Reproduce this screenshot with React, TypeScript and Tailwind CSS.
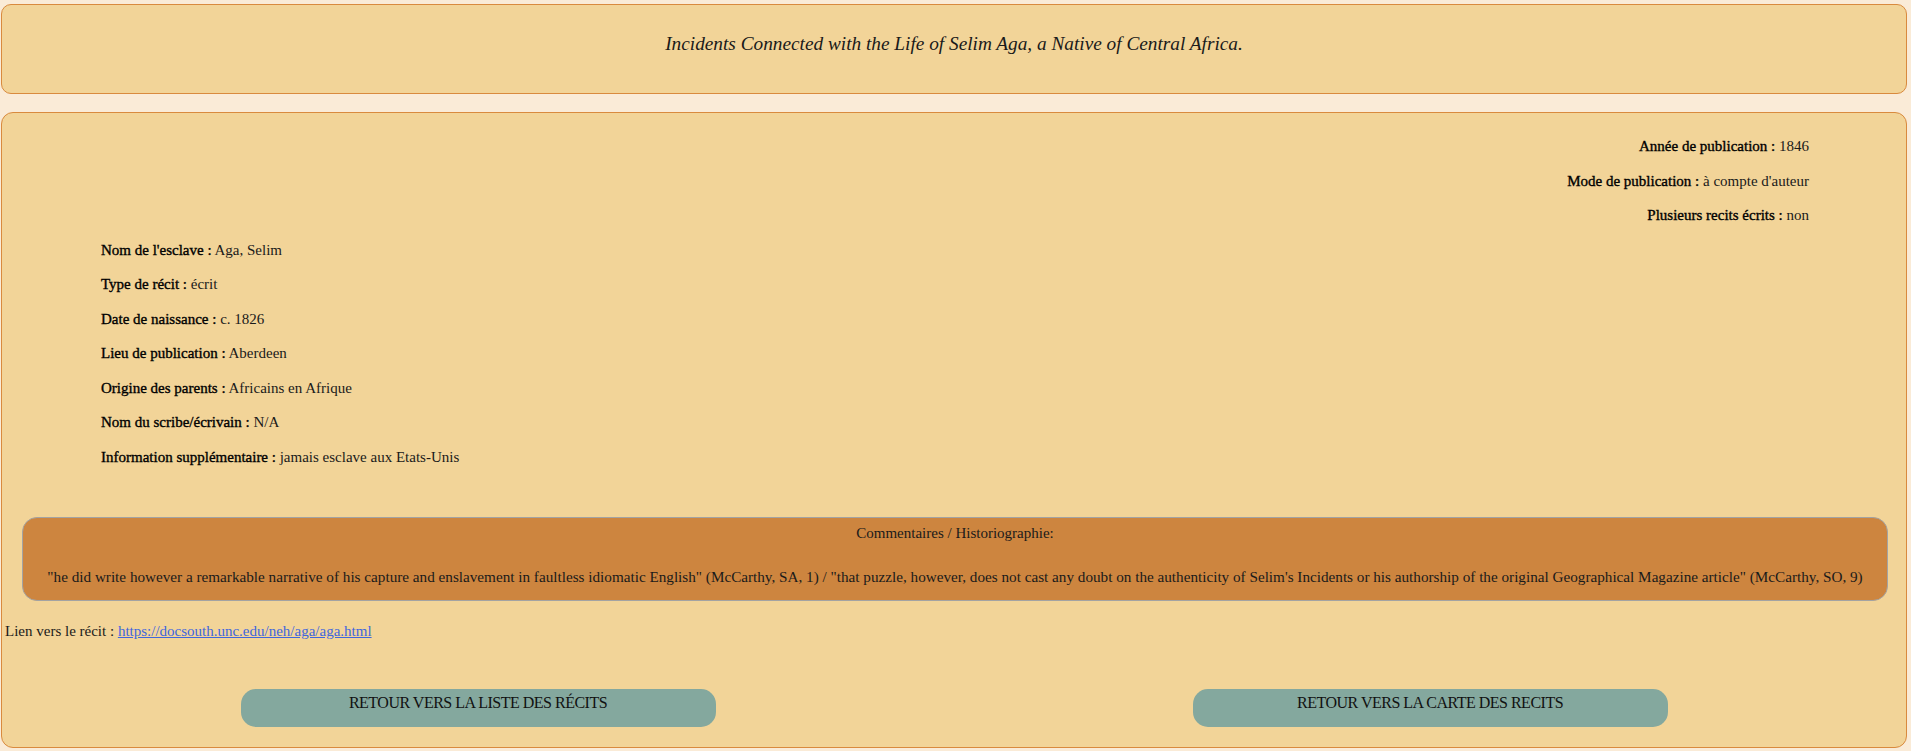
import React from "react";

const serif = { fontFamily: '"Liberation Serif", "Times New Roman", serif' };

function Row({ label, value }: { label: string; value: string }) {
  return (
    <div className="h-[18.5px] leading-[18.5px] whitespace-nowrap">
      <span className="text-black [-webkit-text-stroke:0.35px_#000]">{label} :</span> {value}
    </div>
  );
}

export default function App() {
  return (
    <div
      className="min-h-[751px] w-full bg-[#faebd7] text-[15px] text-[#1a1a1a] pt-[4px] pl-[1px] pr-[4px]"
      style={serif}
    >
      <div className="h-[90px] rounded-[10px] border border-[#d98a3e] bg-[#f2d498] flex items-center justify-center pb-[10px]">
        <h1 className="text-[19.3px] italic leading-[22px]">
          Incidents Connected with the Life of Selim Aga, a Native of Central Africa.
        </h1>
      </div>

      <div className="mt-[18px] h-[636px] rounded-[12px] border border-[#d98a3e] bg-[#f2d498] flex flex-col">
        <div className="pt-[24px] px-[97px] flex flex-col gap-[16px]">
          <div className="flex flex-col gap-[16px] items-end">
            <Row label="Année de publication" value="1846" />
            <Row label="Mode de publication" value="à compte d'auteur" />
            <Row label="Plusieurs recits écrits" value="non" />
          </div>
          <div className="flex flex-col gap-[16px] items-start pl-[2px]">
            <Row label="Nom de l'esclave" value="Aga, Selim" />
            <Row label="Type de récit" value="écrit" />
            <Row label="Date de naissance" value="c. 1826" />
            <Row label="Lieu de publication" value="Aberdeen" />
            <Row label="Origine des parents" value="Africains en Afrique" />
            <Row label="Nom du scribe/écrivain" value="N/A" />
            <Row label="Information supplémentaire" value="jamais esclave aux Etats-Unis" />
          </div>
        </div>

        <div className="mt-[51px] ml-[20px] mr-[18px] h-[84px] rounded-[15px] border border-[#a3a3a3] bg-[#cd853f] flex flex-col items-center pt-[6px]">
          <div className="h-[18px] leading-[18px]">Commentaires / Historiographie:</div>
          <div className="mt-[26px] h-[18px] leading-[18px] whitespace-nowrap text-[15.2px]">
            "he did write however a remarkable narrative of his capture and enslavement in faultless idiomatic English" (McCarthy, SA, 1) / "that puzzle, however, does not cast any doubt on the authenticity of Selim's Incidents or his authorship of the original Geographical Magazine article" (McCarthy, SO, 9)
          </div>
        </div>

        <div className="mt-[21px] pl-[3px] h-[18px] leading-[18px]">
          Lien vers le récit :{" "}
          <a href="#" className="text-[#3f66dd] underline">
            https://docsouth.unc.edu/neh/aga/aga.html
          </a>
        </div>

        <div className="mt-[49px] flex">
          <div className="flex-1 flex justify-center">
            <button className="w-[475px] h-[38px] rounded-[15px] bg-[#84a89e] text-[16px] tracking-[-0.5px] leading-[20px] pt-[4px] flex justify-center items-start text-[#111]">
              RETOUR VERS LA LISTE DES RÉCITS
            </button>
          </div>
          <div className="flex-1 flex justify-center">
            <button className="w-[475px] h-[38px] rounded-[15px] bg-[#84a89e] text-[16px] tracking-[-0.5px] leading-[20px] pt-[4px] flex justify-center items-start text-[#111]">
              RETOUR VERS LA CARTE DES RECITS
            </button>
          </div>
        </div>
      </div>
    </div>
  );
}
